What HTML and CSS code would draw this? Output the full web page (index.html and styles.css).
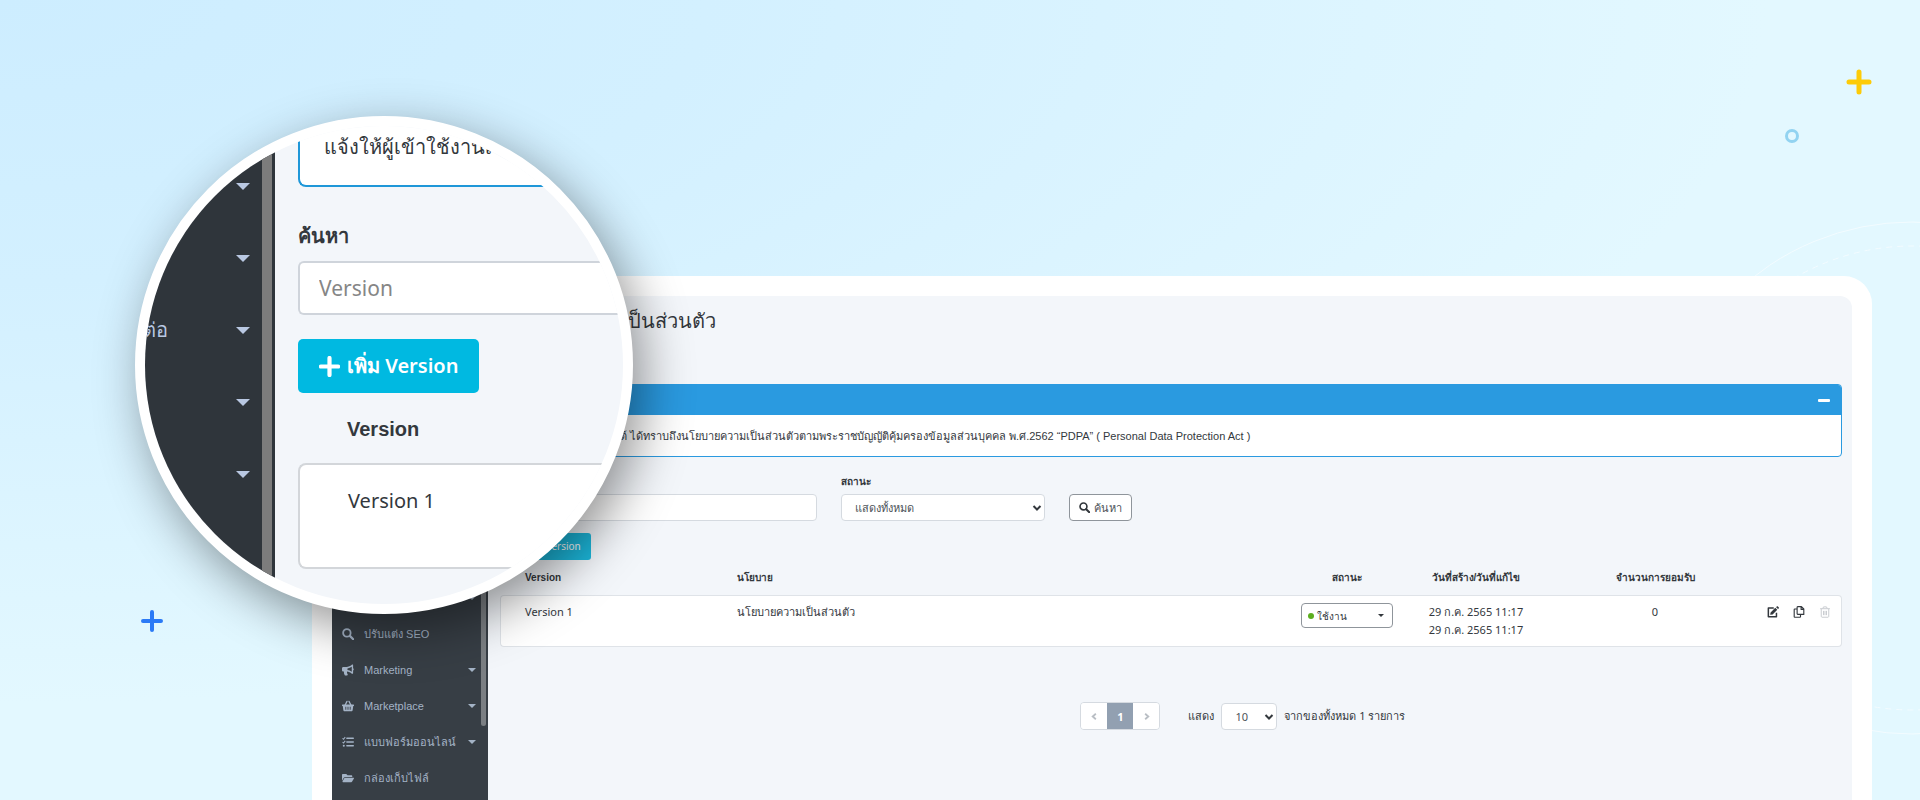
FILE: index.html
```html
<!DOCTYPE html>
<html lang="th">
<head>
<meta charset="utf-8">
<title>นโยบายความเป็นส่วนตัว</title>
<link rel="stylesheet" href="styles.css">
</head>
<body>
<svg class="symbols" aria-hidden="true">
  <symbol id="search" viewBox="0 0 16 16"><circle cx="6.500" cy="6.500" r="5" fill="none" stroke="currentColor" stroke-width="2.400"/><path d="M10.500 10.500 15 15" stroke="currentColor" stroke-width="3" stroke-linecap="round"/></symbol>
  <symbol id="plus" viewBox="0 0 16 16"><path d="M8 1.500v13M1.500 8h13" stroke="currentColor" stroke-width="3.200" stroke-linecap="round"/></symbol>
  <symbol id="horn" viewBox="0 0 16 16"><path fill="currentColor" fill-rule="evenodd" d="M14.500.8c-.5-.3-1 0-1.400.3C11 2.900 8.500 4 6 4H1.800C.8 4 0 4.800 0 5.800v2.400C0 9.200.8 10 1.800 10h.7c-.2 1.700.2 3.400 1.200 4.900.2.300.5.400.8.400h2.200c.8 0 1.200-.8.800-1.500-.8-1.100-1.100-2.400-.8-3.700 2.400.2 4.500 1.200 6.400 2.800.6.500 1.700.3 1.700-.7V8.500c1.200-.7 1.200-2.300 0-3V1.700c0-.4-.1-.7-.3-.9zM13 10.400c-1.700-1.200-3.600-2-5.700-2.300V5.900C9.400 5.600 11.300 4.800 13 3.600z"/></symbol>
  <symbol id="basket" viewBox="0 0 16 16"><path d="M4 7 6.700 1.800M12 7 9.300 1.800" stroke="currentColor" stroke-width="1.700" stroke-linecap="round"/><path fill="currentColor" fill-rule="evenodd" d="M.7 6h14.600c.4 0 .7.300.7.700v.6c0 .4-.3.700-.7.700H15l-.8 5.700c-.1.700-.7 1.300-1.500 1.300H3.300c-.8 0-1.400-.6-1.500-1.300L1 8H.7C.3 8 0 7.700 0 7.300v-.6C0 6.300.3 6 .7 6zM4.500 9v4h1.200V9zm2.900 0v4h1.200V9zm2.900 0v4h1.200V9z"/></symbol>
  <symbol id="tasks" viewBox="0 0 16 16"><path d="M6.500 3H15M6.500 8H15M6.500 13H15" stroke="currentColor" stroke-width="2" stroke-linecap="round"/><path d="M.7 3 2 4.300 4.300 1.600M.7 8 2 9.300 4.300 6.600" fill="none" stroke="currentColor" stroke-width="1.400"/><circle cx="2.400" cy="13" r="1.400" fill="currentColor"/></symbol>
  <symbol id="folder" viewBox="0 0 16 16"><path fill="currentColor" d="M1.300 2.500h4.400l1.700 1.700h5c.8 0 1.300.6 1.300 1.300v1H4.300c-.8 0-1.500.4-1.900 1.100L0 11.500V3.800c0-.7.600-1.300 1.300-1.300zM4.300 7.500h11c.6 0 .9.600.6 1l-2.400 4.300c-.3.500-.7.700-1.200.7H1.200c-.5 0-.8-.5-.6-1L3 8.200c.3-.5.700-.7 1.300-.7z"/></symbol>
  <symbol id="edit" viewBox="0 0 16 16"><path d="M9 2.700H1.800v11.500h10.800V9" fill="none" stroke="currentColor" stroke-width="2" stroke-linejoin="round"/><path fill="currentColor" d="m11 2.400 2.700 2.700-6.200 6.200-3.300.5.600-3.200zM12.100 1.500l.9-.9c.4-.4 1.100-.4 1.500 0l1.100 1.100c.4.400.4 1.100 0 1.500l-.9.900z"/></symbol>
  <symbol id="copy" viewBox="0 0 16 16"><path d="M6.300.9h5L14.400 4v7.200H6.300c-.5 0-.8-.3-.8-.8V1.700c0-.5.300-.8.800-.8zM10.800 1v3.500h3.500M5.500 4H2.300c-.4 0-.7.300-.7.700v9.600c0 .4.300.7.700.700h6.900c.4 0 .8-.3.800-.7v-3" fill="none" stroke="currentColor" stroke-width="1.500" stroke-linejoin="round"/></symbol>
  <symbol id="trash" viewBox="0 0 16 16"><path d="M1.500 3.600h13M5 3.400 6 1.200h4l1 2.200M3 3.800v10c0 .7.500 1.200 1.100 1.200h7.800c.6 0 1.100-.5 1.100-1.200v-10M6 6.500v5.700M8 6.500v5.700M10 6.500v5.700" fill="none" stroke="currentColor" stroke-width="1.300"/></symbol>
</svg>

<main class="page">
  <svg class="rings" viewBox="0 0 160 520" aria-hidden="true">
    <circle cx="152" cy="258" r="256"/>
    <circle cx="152" cy="258" r="232" stroke-dasharray="6 5"/>
  </svg>
  <svg class="deco deco-yellow" viewBox="0 0 26 26" aria-hidden="true"><path d="M13 3v20M3 13h20"/></svg>
  <svg class="deco deco-blue" viewBox="0 0 26 26" aria-hidden="true"><path d="M13 4v18M4 13h18"/></svg>
  <span class="dot-ring"></span>

  <div class="frame">
    <div class="app">
      <nav class="sidebar">
        <a class="item" href="#" aria-label="เมนู"><span class="item-text"></span><i class="caret"></i></a>
        <a class="item" href="#"><svg class="icon"><use href="#search"/></svg><span class="item-text">ปรับแต่ง SEO</span></a>
        <a class="item" href="#"><svg class="icon"><use href="#horn"/></svg><span class="item-text">Marketing</span><i class="caret"></i></a>
        <a class="item" href="#"><svg class="icon"><use href="#basket"/></svg><span class="item-text">Marketplace</span><i class="caret"></i></a>
        <a class="item" href="#"><svg class="icon"><use href="#tasks"/></svg><span class="item-text">แบบฟอร์มออนไลน์</span><i class="caret"></i></a>
        <a class="item" href="#"><svg class="icon"><use href="#folder"/></svg><span class="item-text">กล่องเก็บไฟล์</span></a>
        <span class="scrollbar"></span>
      </nav>

      <section class="content">
        <h1 class="title">นโยบายความเป็นส่วนตัว</h1>

        <div class="panel">
          <div class="panel-head"><button class="collapse" aria-label="ย่อ"></button></div>
          <p class="panel-body">แจ้งให้ผู้เข้าใช้งานเว็บไซต์ ได้ทราบถึงนโยบายความเป็นส่วนตัวตามพระราชบัญญัติคุ้มครองข้อมูลส่วนบุคคล พ.ศ.2562 “PDPA” ( Personal Data Protection Act )</p>
        </div>

        <form class="filters">
          <div class="field field-text">
            <label for="q">ค้นหา</label>
            <input id="q" type="text">
          </div>
          <div class="field field-status">
            <label for="status">สถานะ</label>
            <span class="select"><select id="status"><option>แสดงทั้งหมด</option></select><svg class="chevron" viewBox="0 0 10 10"><path d="m1.500 3 3.500 3.500L8.500 3"/></svg></span>
          </div>
          <button class="btn-search" type="button"><svg class="icon"><use href="#search"/></svg>ค้นหา</button>
        </form>

        <button class="btn-add" type="button"><svg class="icon"><use href="#plus"/></svg>เพิ่ม Version</button>

        <table class="list">
          <colgroup><col class="c-version"><col><col class="c-status"><col class="c-date"><col class="c-count"><col class="c-actions"></colgroup>
          <thead>
            <tr><th>Version</th><th>นโยบาย</th><th class="mid">สถานะ</th><th class="mid">วันที่สร้าง/วันที่แก้ไข</th><th class="mid">จำนวนการยอมรับ</th><td></td></tr>
          </thead>
          <tbody>
            <tr>
              <td>Version 1</td>
              <td>นโยบายความเป็นส่วนตัว</td>
              <td class="mid"><button class="state" type="button"><i class="state-dot"></i>ใช้งาน<i class="caret"></i></button></td>
              <td class="mid">29 ก.ค. 2565 11:17<br>29 ก.ค. 2565 11:17</td>
              <td class="mid">0</td>
              <td class="tools"><div class="tool-row">
                <button aria-label="แก้ไข"><svg class="icon"><use href="#edit"/></svg></button>
                <button aria-label="คัดลอก"><svg class="icon"><use href="#copy"/></svg></button>
                <button aria-label="ลบ" disabled><svg class="icon"><use href="#trash"/></svg></button>
              </div></td>
            </tr>
          </tbody>
        </table>

        <div class="footer">
          <div class="pager">
            <button aria-label="ก่อนหน้า"><svg class="arrow" viewBox="0 0 10 10"><path d="M6.500 2 3 5l3.500 3"/></svg></button>
            <button class="current">1</button>
            <button aria-label="ถัดไป"><svg class="arrow" viewBox="0 0 10 10"><path d="M3.500 2 7 5 3.500 8"/></svg></button>
          </div>
          <div class="per-page">
            <label for="size">แสดง</label>
            <span class="select"><select id="size"><option>10</option></select><svg class="chevron" viewBox="0 0 10 10"><path d="m1.500 3 3.500 3.500L8.500 3"/></svg></span>
            <span>จากของทั้งหมด 1 รายการ</span>
          </div>
        </div>
      </section>
    </div>
  </div>

  <div class="lens">
    <div class="lens-side">
      <div class="lens-item"><i class="caret"></i></div>
      <div class="lens-item"><i class="caret"></i></div>
      <div class="lens-item"><span>ต่อ</span><i class="caret"></i></div>
      <div class="lens-item"><i class="caret"></i></div>
      <div class="lens-item"><i class="caret"></i></div>
    </div>
    <div class="lens-main">
      <p class="lens-panel">แจ้งให้ผู้เข้าใช้งานเว็บไซต์</p>
      <label class="lens-label" for="lens-q">ค้นหา</label>
      <input class="lens-input" id="lens-q" type="text" placeholder="Version">
      <button class="lens-add" type="button"><svg class="icon"><use href="#plus"/></svg>เพิ่ม Version</button>
      <h2 class="lens-head">Version</h2>
      <div class="lens-card">Version 1</div>
    </div>
  </div>
</main>
</body>
</html>
```
FILE: styles.css
```css
* { box-sizing: border-box; }

body {
  margin: 0;
  font-family: "Noto Sans", "Liberation Sans", sans-serif;
  font-size: 11px;
  color: #33383d;
}

button, input, select { font: inherit; color: inherit; margin: 0; }
button { cursor: pointer; }
h1, h2, p { margin: 0; }

.symbols { position: absolute; width: 0; height: 0; }
.icon { width: 12px; height: 12px; flex: none; }

.caret {
  border: 4px solid transparent;
  border-top-color: currentColor;
  border-bottom: 0;
  flex: none;
}

.page {
  position: relative;
  isolation: isolate;
  height: 100vh;
  overflow: hidden;
  display: flex;
  flex-direction: column;
  padding: 276px 48px 0 312px;
  background: radial-gradient(ellipse 92% 88% at 0 0, #cdedff 0%, #d3f0ff 40%, #e3f8ff 100%);
}

/* Backdrop decoration */
.rings {
  position: absolute;
  z-index: -1;
  right: 0;
  top: 220px;
  width: 160px;
  height: 520px;
  overflow: visible;
}
.rings circle { fill: none; stroke: #f3fcff; stroke-width: 1; }

.deco { position: absolute; width: 26px; height: 26px; fill: none; stroke-width: 5; stroke-linecap: round; }
.deco-yellow { right: 48px; top: 69px; stroke: #fdcb08; }
.deco-blue { left: 139px; top: 608px; stroke: #2b7af6; stroke-width: 4; }
.dot-ring {
  position: absolute;
  right: 121px;
  top: 129px;
  width: 14px;
  height: 14px;
  border: 3px solid #92d3f1;
  border-radius: 50%;
}

/* Device frame */
.frame {
  flex: 1;
  display: flex;
  padding: 20px 20px 0;
  background: #fff;
  border-radius: 28px 28px 0 0;
}
.app {
  flex: 1;
  display: flex;
  min-width: 0;
  background: #f3f6fa;
  border-radius: 12px 12px 0 0;
  overflow: hidden;
}

/* Sidebar */
.sidebar {
  position: relative;
  width: 156px;
  flex: none;
  padding-top: 284px;
  background: #373e45;
  font-family: "Liberation Sans", "Noto Sans", sans-serif;
}
.item {
  display: flex;
  align-items: center;
  gap: 10px;
  height: 36px;
  padding: 0 12px 0 10px;
  color: #a4b3c6;
  text-decoration: none;
  white-space: nowrap;
}
.item-text { flex: 1; }
.scrollbar {
  position: absolute;
  right: 2px;
  top: 0;
  width: 5px;
  height: 430px;
  border-radius: 0 0 3px 3px;
  background: #7b7f83;
}

/* Main column */
.content {
  flex: 1;
  min-width: 0;
  padding: 8px 10px 0 12px;
}
.title {
  height: 80px;
  font-size: 20px;
  font-weight: 400;
  line-height: 34px;
}

.panel {
  border: 1px solid #2a9ae0;
  border-radius: 4px;
  background: #fff;
  overflow: hidden;
}
.panel-head {
  display: flex;
  align-items: center;
  justify-content: flex-end;
  height: 30px;
  padding: 0 11px;
  background: #2a9ae0;
}
.collapse {
  width: 12px;
  height: 3px;
  padding: 0;
  border: 0;
  border-radius: 1px;
  background: #fff;
}
.panel-body {
  height: 41px;
  padding: 0 4px;
  line-height: 42px;
  font-family: "Liberation Sans", "Noto Sans", sans-serif;
  font-size: 11px;
  white-space: nowrap;
}

.filters {
  display: flex;
  align-items: flex-end;
  gap: 24px;
  margin-top: 17px;
}
.field { display: flex; flex-direction: column; gap: 5px; }
.field label { line-height: 15px; font-size: 10px; font-weight: 700; }
.field-text { width: 317px; }
.field-status { width: 204px; }
.field input {
  height: 27px;
  padding: 0 12px;
  border: 1px solid #d5dae0;
  border-radius: 4px;
  background: #fff;
}
.select { position: relative; display: flex; }
.select select {
  flex: 1;
  height: 27px;
  padding: 0 13px;
  border: 1px solid #d5dae0;
  border-radius: 4px;
  background: #fff;
  color: #4d5359;
  appearance: none;
}
.chevron {
  position: absolute;
  right: 3px;
  top: 9px;
  width: 10px;
  height: 10px;
  fill: none;
  stroke: #33383d;
  stroke-width: 2;
  pointer-events: none;
}
.btn-search {
  display: flex;
  align-items: center;
  gap: 4px;
  height: 27px;
  padding: 0 9px;
  border: 1px solid #8f959b;
  border-radius: 4px;
  background: #fff;
  color: #4d5359;
}
.btn-search .icon { width: 11px; height: 11px; color: #33383d; }

.btn-add {
  display: flex;
  align-items: center;
  gap: 4px;
  height: 27px;
  margin-top: 12px;
  padding: 0 10px;
  border: 0;
  border-radius: 3px;
  background: #1cb8dc;
  color: #fff;
  font-size: 10px;
}

/* Version list */
.list {
  width: 100%;
  table-layout: fixed;
  border-collapse: separate;
  border-spacing: 0;
}
.c-version { width: 212px; }
.c-status { width: 114px; }
.c-date { width: 144px; }
.c-count { width: 214px; }
.c-actions { width: 80px; }
.list th {
  height: 35px;
  padding: 0 0 0 25px;
  text-align: left;
  font-family: "Liberation Sans", "Noto Sans", sans-serif;
  font-size: 10px;
  font-weight: 700;
  white-space: nowrap;
}
.list tbody td {
  height: 52px;
  padding: 7px 0 0 25px;
  vertical-align: top;
  line-height: 18px;
  background: #fff;
  border: solid #dfe3e8;
  border-width: 1px 0;
}
.list tbody td:first-child { border-left-width: 1px; border-radius: 4px 0 0 4px; padding-left: 24px; }
.list tbody td:last-child { border-right-width: 1px; border-radius: 0 4px 4px 0; }
.list .mid, .list tbody td.mid { padding-left: 0; text-align: center; }

.state {
  display: flex;
  align-items: center;
  gap: 3px;
  width: 92px;
  height: 25px;
  margin: 0 auto;
  padding: 0 8px 0 6px;
  border: 1px solid #8f959b;
  border-radius: 4px;
  background: #fff;
  font-size: 10px;
}
.state-dot { width: 6px; height: 6px; border-radius: 50%; background: #5cae1e; }
.state .caret { margin-left: auto; border-width: 3px; border-bottom: 0; }

.list tbody td.tools { padding: 7px 10px 0 0; }
.tool-row { display: flex; justify-content: flex-end; gap: 14px; height: 18px; }
.tool-row button {
  display: flex;
  align-items: center;
  padding: 0;
  border: 0;
  background: none;
}
.tool-row button:disabled { color: #c9ccd0; }

/* Pagination */
.footer {
  display: flex;
  align-items: center;
  justify-content: center;
  gap: 28px;
  margin-top: 55px;
  padding-left: 144px;
}
.pager { display: flex; border: 1px solid #d5dae0; border-radius: 4px; overflow: hidden; }
.pager button {
  display: flex;
  align-items: center;
  justify-content: center;
  width: 26px;
  height: 26px;
  padding: 0;
  border: 0;
  background: #fff;
}
.pager .current { background: #92a0b1; color: #fff; font-weight: 700; }
.arrow { width: 9px; height: 9px; fill: none; stroke: #b9bec4; stroke-width: 2; }
.per-page { display: flex; align-items: center; gap: 7px; }
.per-page .select { width: 56px; }

/* Magnifier */
.lens {
  position: absolute;
  left: 135px;
  top: 116px;
  width: 498px;
  height: 498px;
  display: flex;
  border: 10px solid #fff;
  border-radius: 50%;
  overflow: hidden;
  background: #f3f6fa;
  box-shadow: 10px 16px 50px rgba(0, 0, 0, 0.42);
  font-size: 20px;
}
.lens-side {
  width: 130px;
  flex: none;
  padding-top: 24px;
  background: linear-gradient(#7c7c7c, #7c7c7c) 117px 0 / 10px 100% no-repeat #2f353b;
  color: #b9c8e2;
}
.lens-item {
  display: flex;
  align-items: center;
  justify-content: flex-end;
  gap: 68px;
  height: 72px;
  padding-right: 25px;
}
.lens-item .caret { border-width: 7px; border-bottom: 0; }
.lens-main {
  flex: 1;
  display: flex;
  flex-direction: column;
  align-items: flex-start;
  padding-left: 23px;
  white-space: nowrap;
}
.lens-panel {
  width: 100%;
  height: 61px;
  padding: 0 24px;
  line-height: 42px;
  border: 2px solid #1f97d8;
  border-top: 0;
  border-right: 0;
  border-radius: 0 0 0 8px;
  background: #fff;
}
.lens-label { margin-top: 33px; line-height: 32px; font-weight: 700; }
.lens-input {
  width: 100%;
  height: 54px;
  margin-top: 9px;
  padding: 0 19px;
  border: 2px solid #cfd4db;
  border-right: 0;
  border-radius: 6px 0 0 6px;
  background: #fff;
  font-size: 21px;
}
.lens-input::placeholder { color: #868686; opacity: 1; }
.lens-add {
  display: flex;
  align-items: center;
  gap: 7px;
  height: 54px;
  margin-top: 24px;
  padding: 0 21px;
  border: 0;
  border-radius: 5px;
  background: #00b9e1;
  color: #fff;
  font-weight: 600;
}
.lens-add .icon { width: 21px; height: 21px; }
.lens-head {
  margin: 20px 0 0 49px;
  font-family: "Liberation Sans", "Noto Sans", sans-serif;
  font-size: 20px;
  line-height: 32px;
}
.lens-card {
  width: 100%;
  height: 106px;
  margin-top: 18px;
  padding: 20px 48px;
  line-height: 32px;
  border: 2px solid #d3d6da;
  border-right: 0;
  border-radius: 8px 0 0 8px;
  background: #fff;
}
```
